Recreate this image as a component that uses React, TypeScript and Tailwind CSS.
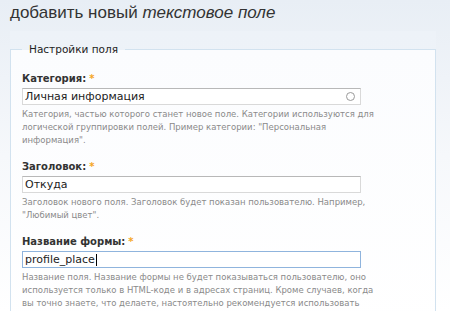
const Required = () => (
  <span className="text-[#f5a623] ml-[3px]" title="Обязательное поле">*</span>
);

const Field = ({
  label,
  value,
  focused,
  autocomplete,
  lines,
}: {
  label: string;
  value: string;
  focused?: boolean;
  autocomplete?: boolean;
  lines: string[];
}) => (
  <div className="flex flex-col">
    <label className="text-[10px] leading-[14px] font-bold text-[#333]">
      {label}:
      <Required />
    </label>
    <div
      className={
        focused
          ? "mt-[2px] w-[339px] h-[17px] flex items-center justify-between px-[2px] bg-white border border-[#8fb4dd]"
          : "mt-[2px] w-[339px] h-[17px] flex items-center justify-between px-[2px] bg-white border border-[#d9d9d9] border-t-[#b8b8b8]"
      }
    >
      <span className="text-[11px] leading-[14px] text-[#222] flex items-center">
        {value}
        {focused && <span className="inline-block w-px h-[12px] bg-black ml-px" />}
      </span>
      {autocomplete && (
        <span className="w-[9px] h-[9px] rounded-full border-[1.5px] border-[#9a9a9a] mr-[3px]" />
      )}
    </div>
    <div className="mt-[3px] text-[8.5px] leading-[13px] text-[#8a8a8a] whitespace-nowrap">
      {lines.map((line) => (
        <div key={line}>{line}</div>
      ))}
    </div>
  </div>
);

export default function App() {
  return (
    <div
      className="w-[450px] h-[311px] overflow-hidden bg-gradient-to-b from-[#e8eef5] via-[#f6f8fb] to-white"
      style={{ fontFamily: '"DejaVu Sans", Verdana, sans-serif' }}
    >
      {/* Title */}
      <h1
        className="pl-[10px] pt-[2px] text-[17px] leading-[21px] text-[#333]"
        style={{ fontFamily: '"Liberation Sans", Arial, sans-serif' }}
      >
        добавить новый <em>текстовое поле</em>
      </h1>

      {/* Settings box */}
      <div className="mt-[8px] ml-[10px] w-[426px] pt-[11px] bg-gradient-to-b from-[#edf2f8] to-[#f3f6fa]">
        <fieldset className="border border-[#d2e2ef] bg-gradient-to-b from-[#fbfcfe] to-white px-[11px] pb-[20px]">
          <legend className="px-[7px] text-[10.5px] leading-[14px] text-[#222]">
            Настройки поля
          </legend>

          <div className="flex flex-col gap-[13px] mt-[16px]">
            <Field
              label="Категория"
              value="Личная информация"
              autocomplete
              lines={[
                "Категория, частью которого станет новое поле. Категории используются для",
                "логической группировки полей. Пример категории: \"Персональная",
                "информация\".",
              ]}
            />

            <Field
              label="Заголовок"
              value="Откуда"
              lines={[
                "Заголовок нового поля. Заголовок будет показан пользователю. Например,",
                "\"Любимый цвет\".",
              ]}
            />

            <Field
              label="Название формы"
              value="profile_place"
              focused
              lines={[
                "Название поля. Название формы не будет показываться пользователю, оно",
                "используется только в HTML-коде и в адресах страниц. Кроме случаев, когда",
                "вы точно знаете, что делаете, настоятельно рекомендуется использовать",
              ]}
            />
          </div>
        </fieldset>
      </div>
    </div>
  );
}
